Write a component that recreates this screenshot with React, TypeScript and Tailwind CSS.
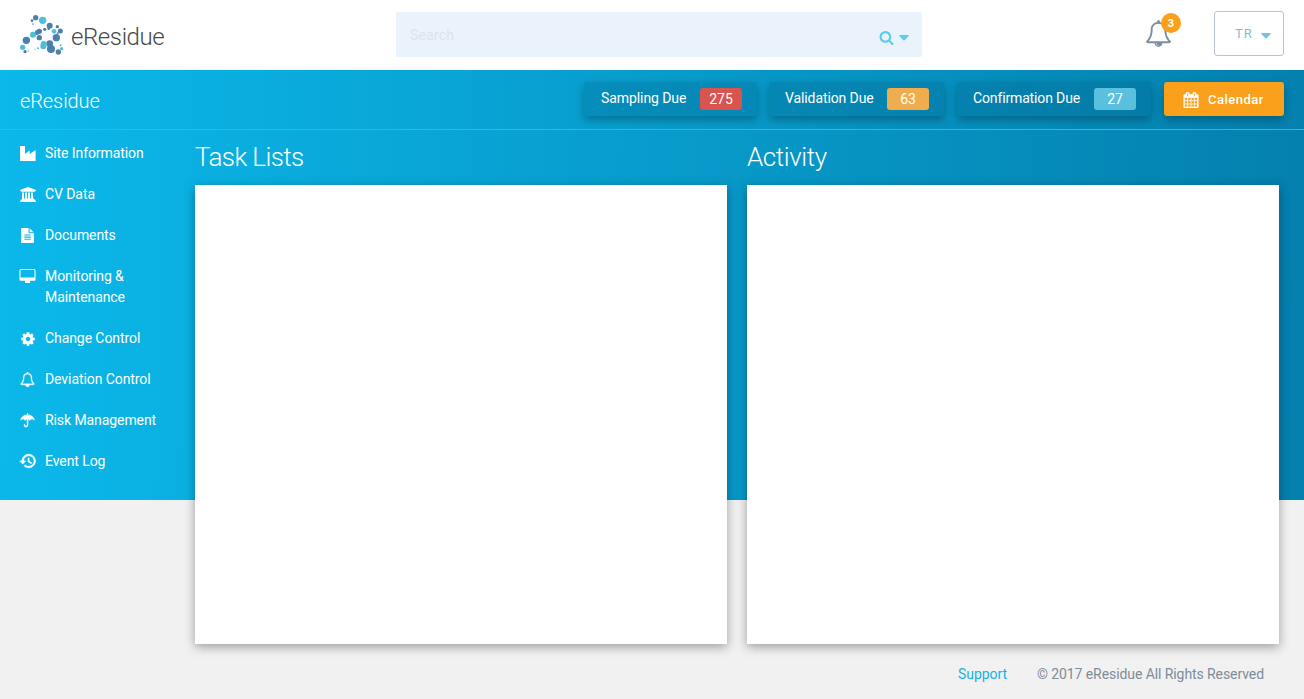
import type { ReactNode } from "react";

const bellPath =
  "M912 1696q0-16-16-16-59 0-101.5-42.5t-42.5-101.5q0-16-16-16t-16 16q0 73 51.5 124.5t124.5 51.5q16 0 16-16zm-666-288h1300q-266-300-266-832 0-51-24-105t-69-103-121.5-80.5-169.5-31.5-169.5 31.5-121.5 80.5-69 103-24 105q0 532-266 832zm1482 0q0 52-38 90t-90 38h-448q0 106-75 181t-181 75-181-75-75-181h-448q-52 0-90-38t-38-90q50-42 91-88t85-119.5 74.5-158.5 50-206 19.5-260q0-152 117-282.5t307-158.5q-8-19-8-39 0-40 28-68t68-28 68 28 28 68q0 20-8 39 190 28 307 158.5t117 282.5q0 139 19.5 260t50 206 74.5 158.5 85 119.5 91 88z";
const filePath =
  "M1596 476q14 14 28 36h-472v-472q22 14 36 28zm-476 164h544v1056q0 40-28 68t-68 28h-1344q-40 0-68-28t-28-68v-1600q0-40 28-68t68-28h800v544q0 40 28 68t68 28zm160 736v-64q0-14-9-23t-23-9h-704q-14 0-23 9t-9 23v64q0 14 9 23t23 9h704q14 0 23-9t9-23zm0-256v-64q0-14-9-23t-23-9h-704q-14 0-23 9t-9 23v64q0 14 9 23t23 9h704q14 0 23-9t9-23zm0-256v-64q0-14-9-23t-23-9h-704q-14 0-23 9t-9 23v64q0 14 9 23t23 9h704q14 0 23-9t9-23z";
const cogPath =
  "M1152 896q0-106-75-181t-181-75-181 75-75 181 75 181 181 75 181-75 75-181zm512-109v222q0 12-8 23t-20 13l-185 28q-19 54-39 91 35 50 107 138 10 12 10 25t-9 23q-27 37-99 108t-94 71q-12 0-26-9l-138-108q-44 23-91 38-16 136-29 186-7 28-36 28h-222q-14 0-24.5-8.5t-11.5-21.5l-28-184q-49-16-90-37l-141 107q-10 9-25 9-14 0-25-11-126-114-165-168-7-10-7-23 0-12 8-23 15-21 51-66.5t54-70.5q-27-50-41-99l-183-27q-13-2-21-12.5t-8-23.5v-222q0-12 8-23t19-13l186-28q14-46 39-92-40-57-107-138-10-12-10-24 0-10 9-23 26-36 98.5-107.5t94.5-71.5q13 0 26 10l138 107q44-23 91-38 16-136 29-186 7-28 36-28h222q14 0 24.5 8.5t11.5 21.5l28 184q49 16 90 37l142-107q9-9 24-9 13 0 25 10 129 119 165 170 7 8 7 22 0 12-8 23-15 21-51 66.5t-54 70.5q26 50 41 98l183 28q13 2 21 12.5t8 23.5z";
const desktopPath =
  "M1728 992v-832q0-13-9.5-22.5t-22.5-9.5h-1600q-13 0-22.5 9.5t-9.5 22.5v832q0 13 9.5 22.5t22.5 9.5h1600q13 0 22.5-9.5t9.5-22.5zm128-832v1088q0 66-47 113t-113 47h-544q0 37 16 77.5t32 71 16 43.5q0 26-19 45t-45 19h-512q-26 0-45-19t-19-45q0-14 16-44t32-70 16-78h-544q-66 0-113-47t-47-113v-1088q0-66 47-113t113-47h1600q66 0 113 47t47 113z";
const historyPath =
  "M13 3c-4.970 0-9 4.030-9 9H1l3.890 3.890.07.14L9 12H6c0-3.870 3.130-7 7-7s7 3.130 7 7-3.130 7-7 7c-1.930 0-3.680-.79-4.940-2.060l-1.420 1.420C8.270 19.990 10.510 21 13 21c4.970 0 9-4.030 9-9s-4.030-9-9-9zm-1 5v5l4.280 2.540.72-1.210-3.500-2.080V8H12z";
const searchPath =
  "M1216 832q0-185-131.5-316.5t-316.5-131.5-316.5 131.5-131.5 316.5 131.5 316.5 316.5 131.5 316.5-131.5 131.5-316.5zm512 832q0 52-38 90t-90 38q-54 0-90-38l-343-342q-179 124-399 124-143 0-273.5-55.5t-225-150-150-225-55.5-273.5 55.5-273.5 150-225 225-150 273.5-55.5 273.5 55.5 225 150 150 225 55.5 273.5q0 220-124 399l343 343q37 37 37 90z";
const calendarPath =
  "M192 1664h288v-288h-288v288zm352 0h320v-288h-320v288zm-352-352h288v-320h-288v320zm352 0h320v-320h-320v320zm-352-384h288v-288h-288v288zm736 736h320v-288h-320v288zm-384-736h320v-288h-320v288zm768 736h288v-288h-288v288zm-384-352h320v-320h-320v320zm-352-864v-288q0-13-9.5-22.5t-22.5-9.5h-64q-13 0-22.5 9.5t-9.5 22.5v288q0 13 9.5 22.5t22.5 9.5h64q13 0 22.5-9.5t9.5-22.5zm736 864h288v-320h-288v320zm-384-384h320v-288h-320v288zm384 0h288v-288h-288v288zm32-480v-288q0-13-9.5-22.5t-22.5-9.5h-64q-13 0-22.5 9.5t-9.5 22.5v288q0 13 9.5 22.5t22.5 9.5h64q13 0 22.5-9.5t9.5-22.5zm384-64v1280q0 52-38 90t-90 38h-1408q-52 0-90-38t-38-90v-1280q0-52 38-90t90-38h128v-96q0-66 47-113t113-47h64q66 0 113 47t47 113v96h384v-96q0-66 47-113t113-47h64q66 0 113 47t47 113v96h128q52 0 90 38t38 90z";

function Glyph({ d, className, box = "0 0 1792 1792" }: { d: string; className: string; box?: string }) {
  return (
    <svg viewBox={box} fill="currentColor" className={className}>
      <path d={d} />
    </svg>
  );
}

function Caret({ className }: { className: string }) {
  return (
    <svg viewBox="0 0 10 6" fill="currentColor" className={className}>
      <path d="M.6 0h8.8q.6.4.3 1L5.6 5.2q-.6.5-1.2 0L.3 1Q0 .4.6 0z" />
    </svg>
  );
}

const light = "#4fbfd9";
const dark = "#4a7fb0";
const dots: [number, number, number, string][] = [
  [77, 38, 8, dark], [66, 47, 4, dark], [69, 57, 2, dark], [98, 46, 11, light],
  [119, 62, 9, dark], [142, 65, 5, dark], [151, 78, 7.5, dark], [132, 79, 7, light],
  [116, 71, 4, dark], [104, 73, 5, dark], [88, 79, 8, dark], [81, 83, 7, dark],
  [69, 89, 9, light], [88, 98, 8, dark], [49, 106, 11, dark], [38, 127, 8, light],
  [45, 140, 5, dark], [55, 138, 2.5, light], [139, 98, 11, dark], [119, 116, 10, dark],
  [101, 117, 9, light], [100, 124, 9, light], [123, 132, 12, dark], [145, 141, 8, dark],
  [155, 131, 5, light], [152, 121, 3, light], [84, 130, 3, light], [75, 133, 2, light],
  [143, 85, 3, dark],
];

function LogoMark() {
  return (
    <svg viewBox="30 30 135 120" className="-mt-[2px] h-[40px] w-[45px] shrink-0">
      {dots.map(([x, y, r, fill], i) => (
        <circle key={i} cx={x} cy={y} r={r} fill={fill} />
      ))}
    </svg>
  );
}

const nav: { label: string; icon: ReactNode }[] = [
  {
    label: "Site Information",
    icon: (
      <svg viewBox="0 0 16 16" fill="currentColor" className="-mt-px size-4">
        <path d="M0 1h5v8l4.600-3.400v3.400L15.600 5v11H0z" />
      </svg>
    ),
  },
  {
    label: "CV Data",
    icon: (
      <svg viewBox="0 0 16 16" fill="currentColor" className="-mt-px size-4">
        <path d="M8 1l8 3v1h-1v.8H1V5H0V4zM2 6.600h2v6h1v-6h2v6h1v-6h2v6h1v-6h2v6h1v1H2zM0 14.800h.8V13.400h14.400v1.400h.8V16H0z" />
      </svg>
    ),
  },
  { label: "Documents", icon: <Glyph d={filePath} className="size-[15px]" /> },
  {
    label: "Monitoring & Maintenance",
    icon: <Glyph d={desktopPath} box="-64 0 1920 1792" className="h-[15px] w-[17px] shrink-0" />,
  },
  { label: "Change Control", icon: <Glyph d={cogPath} className="size-4" /> },
  {
    label: "Deviation Control",
    icon: <Glyph d={bellPath} className="size-[15px] stroke-current [stroke-width:40]" />,
  },
  {
    label: "Risk Management",
    icon: (
      <svg viewBox="0 0 15 15" fill="currentColor" className="size-[15px] stroke-current [stroke-width:0.35]">
        <path d="M7 1.700V.8q0-.5.5-.5t.5.5v.9c3.200.2 5.800 2.300 6.500 5 .1.500-.3.500-.5.300-1.500-1.300-2.800-1.200-3.900.2-.2.300-.4.300-.6 0-.4-.6-.9-1-1.400-1.200v5.800c0 3.100-4.200 3.100-4.200 0 0-.7 1.100-.7 1.100 0 0 1.600 2 1.600 2 0V6c-.6.200-1.100.600-1.500 1.200-.2.300-.4.300-.6 0C3.800 5.800 2.500 5.700 1 7 .800 7.200.4 7.200.5 6.700c.7-2.700 3.300-4.800 6.500-5z" />
      </svg>
    ),
  },
  {
    label: "Event Log",
    icon: (
      <Glyph
        d={historyPath}
        box="0 0 24 24"
        className="-mt-px size-[18px] shrink-0 stroke-current [stroke-width:0.8]"
      />
    ),
  },
];

function DueCard({ label, count, card, badge }: { label: string; count: string; card: string; badge: string }) {
  return (
    <div
      className={`flex h-[34px] items-start rounded-[3px] bg-[#03658a]/30 pt-[6px] text-sm leading-5 text-white shadow-[0_4px_8px_rgba(0,0,0,0.28)] ${card}`}
    >
      <span className="flex-1">{label}</span>
      <span className={`mr-[15px] h-[22px] w-[42px] rounded-[3px] text-center leading-[22px] ${badge}`}>{count}</span>
    </div>
  );
}

function Panel({ title, tracking }: { title: string; tracking: string }) {
  return (
    <section className="w-[532px]">
      <h2 className={`h-[55px] pt-[10px] text-[26px] leading-[34px] font-light text-white ${tracking}`}>{title}</h2>
      <div className="h-[459px] bg-white shadow-[0_3px_10px_rgba(0,0,0,0.35)]" />
    </section>
  );
}

export default function App() {
  return (
    <div className="h-[699px] w-[1304px] overflow-hidden bg-[#f1f1f1] font-['Roboto',sans-serif]">
      <header className="flex h-[70px] items-start bg-white">
        <div className="flex w-[396px] items-center gap-[6px] pt-[14px] pl-5">
          <LogoMark />
          <span className="pt-[3px] text-[24px] leading-10 font-light tracking-[-0.4px] text-[#484848]">eResidue</span>
        </div>
        <div className="mt-3 flex h-[45px] w-[526px] rounded-[2px] bg-[#eaf2fc] pr-[13px] pl-[14px]">
          <span className="flex-1 text-sm leading-[46px] tracking-[0.2px] text-[#dfe3e8]">Search</span>
          <Glyph d={searchPath} className="mt-[18px] h-[15px] w-[15px] text-[#5bcbee]" />
          <Caret className="mt-[23px] ml-[5px] h-[6px] w-[10px] text-[#5bcbee]" />
        </div>
        <div className="relative mt-5 ml-[223px] h-[27px] w-[26px]">
          <Glyph d={bellPath} className="size-[27px] text-[#7f8fa0]" />
          <span className="absolute -top-[7px] left-4 size-5 rounded-full bg-[#faa01b] text-center text-[11px] leading-[21px] font-bold text-white">
            3
          </span>
        </div>
        <button className="mt-[11px] ml-[43px] flex h-[45px] w-[70px] rounded-[3px] border border-[#b5c5d6] pl-[20px] text-[13px] leading-[44px] tracking-[1px] text-[#7cc0da]">
          TR
          <Caret className="mt-[21px] ml-[8px] h-[6px] w-[10px]" />
        </button>
      </header>

      <div className="h-[430px] bg-[linear-gradient(91deg,#0bb8ea_0%,#0480ae_100%)]">
        <div className="flex h-[60px] items-start border-b border-[#35b6e0] pt-3 pr-5 pl-5">
          <h1 className="flex-1 pt-[5px] text-xl leading-7 font-light tracking-[-0.1px] text-white">eResidue</h1>
          <div className="flex gap-[13px]">
            <DueCard label="Sampling Due" count="275" card="w-[173px] pl-[17px] tracking-[-0.08px]" badge="bg-[#d9534f]" />
            <DueCard label="Validation Due" count="63" card="-ml-px w-[175px] pl-4 tracking-[-0.1px]" badge="bg-[#f0ad4e]" />
            <DueCard label="Confirmation Due" count="27" card="w-[194px] pl-4 tracking-[-0.14px]" badge="bg-[#5bc0de]" />
            <button className="flex h-[34px] w-[120px] items-center rounded-[3px] bg-[#faa01b] pl-[19px] text-[13px] font-medium tracking-[0.5px] text-white shadow-[0_4px_8px_rgba(0,0,0,0.28)]">
              <Glyph d={calendarPath} className="mt-[2px] size-4 stroke-current [stroke-width:30]" />
              <span className="pt-px pl-[9px]">Calendar</span>
            </button>
          </div>
        </div>

        <div className="flex">
          <nav className="flex w-[195px] flex-col gap-5 pt-[13px] pl-5 text-sm leading-[21px] tracking-[-0.08px] text-white">
            {nav.map(({ label, icon }) => (
              <a key={label} className="flex pr-8">
                <span className="flex h-[21px] w-[25px] shrink-0 items-center">
                  <span className="-ml-px flex w-[17px] justify-center">{icon}</span>
                </span>
                <span>{label}</span>
              </a>
            ))}
          </nav>
          <main className="flex gap-5">
            <Panel title="Task Lists" tracking="tracking-[-0.6px]" />
            <Panel title="Activity" tracking="tracking-[-0.4px]" />
          </main>
        </div>
      </div>

      <footer className="flex justify-end gap-[30px] pt-[164px] pr-10 text-sm leading-5 tracking-[-0.08px] text-[#7f8c99]">
        <a className="text-[#14b1e7]">Support</a>
        <span>© 2017 eResidue All Rights Reserved</span>
      </footer>
    </div>
  );
}
